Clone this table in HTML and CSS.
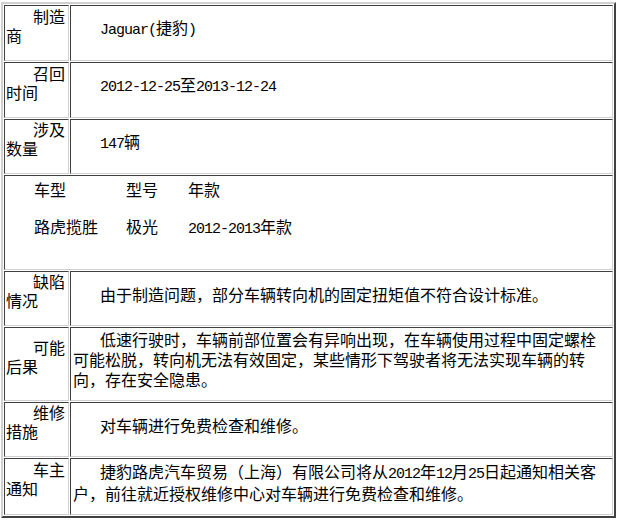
FILE: index.html
```html
<!DOCTYPE html>
<html lang="zh-CN">
<head>
<meta charset="utf-8">
<title>召回信息</title>
<link rel="stylesheet" href="styles.css">
</head>
<body>
<table class="recall">
  <tr class="row-std">
    <td class="lbl">制造商</td>
    <td class="val"><span class="lat">Jaguar(</span>捷豹<span class="lat">)</span></td>
  </tr>
  <tr class="row-std">
    <td class="lbl">召回时间</td>
    <td class="val"><span class="lat">2012-12-25</span>至<span class="lat">2013-12-24</span></td>
  </tr>
  <tr class="row-short">
    <td class="lbl">涉及数量</td>
    <td class="val"><span class="lat">147</span>辆</td>
  </tr>
  <tr class="row-models">
    <td class="models" colspan="2">
      <div class="model-grid">
        <span>车型</span><span>型号</span><span>年款</span>
        <span>路虎揽胜</span><span>极光</span><span><span class="lat">2012-2013</span>年款</span>
      </div>
    </td>
  </tr>
  <tr class="row-short">
    <td class="lbl">缺陷情况</td>
    <td class="val">由于制造问题，部分车辆转向机的固定扭矩值不符合设计标准。</td>
  </tr>
  <tr class="row-tall">
    <td class="lbl">可能后果</td>
    <td class="val">低速行驶时，车辆前部位置会有异响出现，在车辆使用过程中固定螺栓可能松脱，转向机无法有效固定，某些情形下驾驶者将无法实现车辆的转向，存在安全隐患。</td>
  </tr>
  <tr class="row-short">
    <td class="lbl">维修措施</td>
    <td class="val">对车辆进行免费检查和维修。</td>
  </tr>
  <tr class="row-last">
    <td class="lbl">车主通知</td>
    <td class="val">捷豹路虎汽车贸易（上海）有限公司将从<span class="lat">2012</span>年<span class="lat">12</span>月<span class="lat">25</span>日起通知相关客户，前往就近授权维修中心对车辆进行免费检查和维修。</td>
  </tr>
</table>
</body>
</html>
```

FILE: styles.css
```css
html, body {
  margin: 0;
  padding: 0;
  background: #ffffff;
}

body {
  font-family: "Noto Sans CJK SC", "Noto Sans", sans-serif;
  font-size: 16px;
  color: #000000;
  text-autospace: no-autospace;
  text-spacing-trim: space-all;
}

.recall {
  margin: 2px 0 0 1px;
  width: 615px;
  table-layout: fixed;
  border-collapse: separate;
  border-spacing: 1px;
  border-style: solid;
  border-width: 2px;
  border-color: #d0d0d0 #404040 #404040 #d0d0d0;
}

.recall td {
  box-sizing: border-box;
  border-style: solid;
  border-width: 1px;
  border-color: #404040 #d0d0d0 #d0d0d0 #404040;
}

.lbl {
  width: 65px;
  vertical-align: middle;
  line-height: 19px;
  padding: 0 1px 15px 1px;
  text-indent: 27px;
}

.val {
  vertical-align: middle;
  line-height: 20px;
  padding: 0 1px 10px 2px;
  text-indent: 27px;
}

.lat {
  font-family: "Liberation Mono", monospace;
  font-size: 15px;
  letter-spacing: -1px;
  line-height: 16px;
}

.row-std td {
  height: 56px;
}

.row-short td {
  height: 55px;
}

.row-tall td {
  height: 74px;
}

.row-last td {
  height: 57px;
}

.row-models td {
  height: 95px;
}

.models {
  vertical-align: top;
  padding: 3px 0 0 29px;
}

.model-grid {
  display: grid;
  grid-template-columns: 92px 62px auto;
  grid-auto-rows: 20px;
  row-gap: 17px;
  line-height: 20px;
}
```
